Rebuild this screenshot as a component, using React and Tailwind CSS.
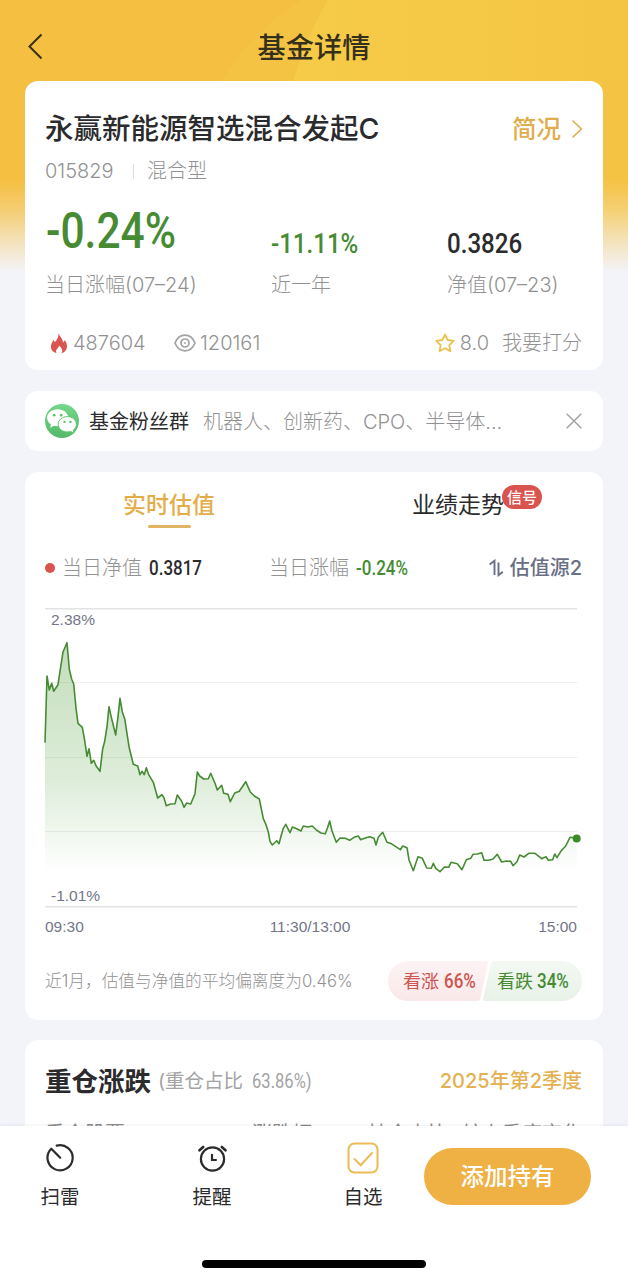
import React from "react";

// Intraday estimate, one [x, y] pair per sample
const POINTS = [
  [45, 742.7], [47, 676], [49.3, 690], [51.7, 683.3], [53.7, 691.3], [58, 684.7], [60.3, 669.3], [63, 652],
  [67, 642.7], [69.3, 669.3], [71.7, 679.3], [73.7, 684], [76, 708], [78, 723.3], [82.3, 727.3], [84.7, 740.7],
  [87, 756.3], [89, 748.7], [91.3, 763.3], [93.7, 760.3], [96, 765.7], [100, 771.3], [102.7, 748.7], [104.7, 741.3],
  [107, 726.7], [109, 706.7], [111.3, 717.3], [115.7, 735], [118, 716.7], [120, 698.3], [122.3, 712], [124.7, 718.7],
  [129, 746.7], [133.3, 764.3], [137.7, 766], [140, 774.7], [142, 771.3], [144.3, 774.7], [146.3, 767.7], [148.7, 774.7],
  [153.3, 782.3], [157.7, 798], [162, 794.7], [164, 798], [166.3, 805.7], [170.7, 804], [175, 803.7], [177.3, 795],
  [181.7, 801.3], [184, 807.3], [186.7, 803], [190.7, 804], [195, 793.7], [197.3, 772], [199.7, 776], [203.7, 779],
  [208.3, 778.7], [210.7, 773.3], [215, 783.3], [217.3, 790], [221.7, 785.3], [223.7, 793.3], [228, 794.3], [230.3, 801.7],
  [234.7, 793], [239.3, 791.3], [245.7, 781.7], [250.3, 792], [254.7, 796.3], [259.3, 799], [263.3, 818.7], [266, 824.7],
  [268.3, 832], [270, 841.3], [272.3, 845], [276.7, 840.7], [279, 843.7], [281, 836.3], [283.3, 828.3], [285.7, 824.3],
  [290, 832.7], [292.3, 827], [296.7, 828.7], [301, 831], [303.3, 826], [307.7, 827], [312.3, 826], [316.7, 830.3],
  [321, 833], [325.3, 833.7], [327.7, 827.3], [329.7, 821], [332, 831], [336.3, 842.3], [340, 838], [345.3, 838.3],
  [349.7, 840.3], [354, 837.3], [358.3, 836], [360.7, 839.7], [365.3, 838], [369.7, 836.7], [374, 838.3], [376, 845],
  [378.3, 837.3], [382.7, 832.3], [387, 842.3], [391.3, 843.7], [400.3, 849.7], [402.7, 846], [407, 847.7], [409, 860],
  [413.3, 870.7], [418, 856.7], [422.3, 858.3], [426.7, 868], [431.3, 868.3], [433.3, 863.3], [435.7, 868.3], [440, 871.7],
  [444.3, 867], [448.7, 867.3], [451, 862.3], [457.3, 863.7], [462, 869.7], [466.3, 859.7], [470.7, 858.3], [473, 854.3],
  [477.3, 854], [481.7, 852.7], [484, 860.3], [488.7, 860.3], [493, 859], [497.3, 854.3], [501.7, 862], [506.3, 861],
  [510.7, 861.3], [513, 865.7], [517, 861.7], [519.7, 855], [524, 857], [528.7, 853.3], [535, 853.3], [541.7, 858.7],
  [546, 856.7], [548.3, 860.3], [552.7, 859.7], [554.7, 854], [557, 857.7], [561.3, 850.7], [565.7, 846], [570, 837.3],
  [576.7, 838.3],
];

const LINE = POINTS.map((p) => p.join(",")).join(" ");

// Condensed digits
function Num({ className = "", children }) {
  return (
    <span
      className={`inline-block origin-left scale-x-[0.85] whitespace-nowrap font-[Roboto] font-medium ${className}`}
    >
      {children}
    </span>
  );
}

function HeaderBackground() {
  return (
    <div className="absolute inset-x-0 top-0 h-[290px]">
      <svg className="block" width="628" height="290" viewBox="0 0 628 290">
        <defs>
          <linearGradient id="fade" x1="0" y1="0" x2="0" y2="1">
            <stop offset="0.62" stopColor="#f3f4fa" stopOpacity="0" />
            <stop offset="0.72" stopColor="#f3f4fa" stopOpacity="0.25" />
            <stop offset="0.84" stopColor="#f3f4fa" stopOpacity="0.68" />
            <stop offset="0.94" stopColor="#f3f4fa" stopOpacity="1" />
          </linearGradient>
          <linearGradient id="sun" x1="0" y1="0" x2="1" y2="0">
            <stop offset="0" stopColor="#f6cb48" />
            <stop offset="1" stopColor="#f4c543" />
          </linearGradient>
        </defs>
        <rect width="628" height="290" fill="#f5bf42" />
        <path d="M302 0Q240 38 213 100V290H628V0Z" fill="#f5c344" />
        <path d="M328 0Q300 48 289 100V150H628V0Z" fill="url(#sun)" />
        <path d="M603 80H628V190H603Z" fill="#f5c344" />
        <rect width="628" height="290" fill="url(#fade)" />
      </svg>
    </div>
  );
}

function Flame() {
  return (
    <svg width="18" height="21" viewBox="0 0 18 21">
      <path
        fill="#dc5450"
        d="M8.600 0C9.300 3.600 13.300 5.700 12.900 9.500C13.900 8.900 14.400 7.900 14.500 6.900C16.500 9.200 17.400 11.800 16.900 14.500C16.400 17.400 14.200 19.500 11.500 20.200C13.300 17.300 11.500 14.700 9.100 12.400C8.700 15 6.100 15.800 6 18C5.900 18.900 6.200 19.700 6.700 20.300C3 19.500.8 16.900.9 13.600C1 10.900 2.500 9.300 3.300 7.100C4.200 7.700 4.600 8.500 4.800 9.300C7.500 6.800 8.500 3.400 8.600 0Z"
      />
    </svg>
  );
}

function Eye() {
  return (
    <svg width="22" height="18" viewBox="0 0 22 18" fill="none" stroke="#a3a3a3" strokeWidth="1.700">
      <path d="M1 9C3 4 6.500 1.200 11 1.200S19 4 21 9C19 14 15.500 16.800 11 16.800S3 14 1 9Z" />
      <circle cx="11" cy="9" r="4" />
      <circle cx="11" cy="9" r="0.900" fill="#a3a3a3" stroke="none" />
    </svg>
  );
}

function Star() {
  return (
    <svg width="20" height="20" viewBox="0 0 20 20" fill="none" stroke="#ecc04c" strokeWidth="1.800" strokeLinejoin="round">
      <path d="M10 1.500L12.700 7L18.700 7.900L14.300 12.100L15.400 18.200L10 15.300L4.600 18.200L5.700 12.100L1.300 7.900L7.300 7Z" />
    </svg>
  );
}

function WeChat() {
  return (
    <svg width="34" height="34" viewBox="0 0 34 34">
      <defs>
        <linearGradient id="wx" x1="0" y1="0" x2="0" y2="1">
          <stop offset="0" stopColor="#74d78b" />
          <stop offset="1" stopColor="#54b968" />
        </linearGradient>
      </defs>
      <circle cx="17" cy="17" r="17" fill="url(#wx)" />
      <path
        fill="#fff"
        d="M12.600 5.200C6.700 5.200 2.100 9 2.100 13.800C2.100 16.600 3.500 18.900 5.900 20.500L5.100 23.700L8.900 21.800C10.300 22.200 11.900 22.400 13.800 22.200C21 21.600 23.300 17.500 23.300 13.800C23.300 9 18.700 5.200 12.600 5.200Z"
      />
      <path
        fill="#fff"
        stroke="#61c575"
        strokeWidth="1"
        d="M22.300 12.600C17.300 12.600 13.200 16 13.200 20.300S17.300 28 22.300 28C23.500 28 24.600 27.800 25.700 27.500L29 29.200L28.200 26.200C30.300 24.800 31.400 22.700 31.400 20.300C31.400 16 27.300 12.600 22.300 12.600Z"
      />
      <g fill="#61c575">
        <circle cx="9.200" cy="11.200" r="1.400" />
        <circle cx="16.200" cy="11.200" r="1.400" />
        <circle cx="19.500" cy="17.900" r="1.200" />
        <circle cx="25.400" cy="17.900" r="1.200" />
      </g>
    </svg>
  );
}

function FundCard() {
  return (
    <section className="h-[289px] rounded-[13px] bg-white pl-5 pr-[21px] pt-[28px]">
      <div className="flex h-10 items-center justify-between">
        <h2 className="text-[28.500px] font-medium text-[#2b2b2d]">永赢新能源智选混合发起C</h2>
        <div className="mr-[-1px] flex items-center pt-px text-[24.500px] font-medium text-[#e0ac4c]">
          简况
          <svg className="mb-[2px] ml-2.5" width="12" height="20" viewBox="0 0 12 20" fill="none" stroke="#e0ac4c" strokeWidth="1.600">
            <path d="M1.500 1.500L10.300 10L1.500 18.500" />
          </svg>
        </div>
      </div>

      <div className="mt-1.5 flex h-8 items-center text-[20px] font-light text-[#929292]">
        <span className="w-[88px]">015829</span>
        <span className="h-[15px] w-px bg-[#dedede]" />
        <span className="ml-[13px]">混合型</span>
      </div>

      <div className="mt-[11px] grid h-[104px] grid-cols-[226px_176px_1fr] grid-rows-[70px_34px]">
        <div className="flex h-[66px] items-center pl-px text-[#468b34]">
          <Num className="text-[50px] leading-none">-0.24%</Num>
        </div>
        <div className="flex h-[66px] items-end pb-[6px] text-[#468b34]">
          <Num className="scale-x-[0.86] text-[28px] leading-none">-11.11%</Num>
        </div>
        <div className="flex h-[66px] items-end pb-[6px] text-[#2b2b2d]">
          <Num className="scale-x-[0.86] text-[28px] leading-none">0.3826</Num>
        </div>
        <Label>当日涨幅(07–24)</Label>
        <Label>近一年</Label>
        <Label>净值(07–23)</Label>
      </div>

      <div className="mt-[25px] flex h-8 items-center text-[20px] font-light text-[#929292]">
        <span className="ml-[5px] flex w-[124px] items-center gap-[5px]">
          <Flame />
          487604
        </span>
        <span className="flex items-center gap-[4px]">
          <Eye />
          120161
        </span>
        <span className="ml-auto flex items-center gap-[5px]">
          <Star />
          8.0
        </span>
        <span className="ml-[13px]">我要打分</span>
      </div>
    </section>
  );
}

function Label({ children }) {
  return (
    <div className="flex h-[34px] items-center whitespace-nowrap text-[20px] font-light text-[#929292]">
      {children}
    </div>
  );
}

function FansBanner() {
  return (
    <section className="mt-[21px] flex h-[60px] items-center rounded-[13px] bg-white pl-5 pr-[21px]">
      <WeChat />
      <span className="ml-[10px] pt-[2px] text-[20px] text-[#2b2b2d]">基金粉丝群</span>
      <span className="ml-3.5 pt-[2px] text-[20px] font-light text-[#929292]">机器人、创新药、CPO、半导体...</span>
      <svg className="ml-auto" width="16" height="16" viewBox="0 0 16 16" stroke="#a0a0a0" strokeWidth="1.400">
        <path d="M.7.7L15.300 15.300M15.300.7L.7 15.300" />
      </svg>
    </section>
  );
}

function Chart() {
  return (
    <div className="relative h-[300px]">
      <svg className="block overflow-visible" width="532" height="300" viewBox="45 608 532 300">
        <defs>
          <linearGradient id="area" gradientUnits="userSpaceOnUse" x1="0" y1="642" x2="0" y2="872">
            <stop offset="0" stopColor="#4f9f3a" stopOpacity="0.340" />
            <stop offset="0.600" stopColor="#4f9f3a" stopOpacity="0.190" />
            <stop offset="1" stopColor="#4f9f3a" stopOpacity="0" />
          </linearGradient>
        </defs>
        <g stroke="#eeeeef" strokeWidth="1.200">
          <path d="M45 682.500H577M45 757.500H577M45 831.500H577" />
        </g>
        <g stroke="#e2e3e5" strokeWidth="1.500">
          <path d="M45 608.700H577M45 906.700H577" />
        </g>
        <polygon points={`45,872 ${LINE} 576.7,872`} fill="url(#area)" />
        <polyline points={LINE} fill="none" stroke="#468b34" strokeWidth="1.600" strokeLinejoin="round" />
        <circle cx="576.700" cy="838.500" r="4" fill="#3b8a26" />
      </svg>
      <span className="absolute left-1.5 top-[3px] font-['Liberation_Sans'] text-[15.500px] leading-[18px] text-[#73768a]">
        2.38%
      </span>
      <span className="absolute bottom-[3px] left-1.5 font-['Liberation_Sans'] text-[15.500px] leading-[18px] text-[#73768a]">
        -1.01%
      </span>
    </div>
  );
}

function SentimentPill() {
  return (
    <div className="relative flex h-10 w-[194px] text-[18px]">
      <svg className="absolute inset-0" width="194" height="40" viewBox="0 0 194 40">
        <defs>
          <linearGradient id="up" x1="0" y1="0" x2="0" y2="1">
            <stop offset="0" stopColor="#fdf3f4" />
            <stop offset="1" stopColor="#fae8e9" />
          </linearGradient>
          <linearGradient id="down" x1="0" y1="0" x2="0" y2="1">
            <stop offset="0" stopColor="#f3f8f3" />
            <stop offset="1" stopColor="#e8f2e7" />
          </linearGradient>
        </defs>
        <path d="M20 0H98Q100.500 0 100 2.500L92.500 37.500Q92 40 89.500 40H20A20 20 0 0 1 20 0Z" fill="url(#up)" />
        <path d="M106 0H174A20 20 0 0 1 174 40H97Q94.500 40 95 37.500L103 2.500Q103.600 0 106 0Z" fill="url(#down)" />
      </svg>
      <span className="relative flex w-[94px] items-center pl-[15px] text-[#cc5552]">
        看涨
        <Num className="ml-[5px] scale-x-[0.78] text-[20px]">66%</Num>
      </span>
      <span className="relative flex items-center pl-[15px] text-[#468b34]">
        看跌
        <Num className="ml-[4px] scale-x-[0.78] text-[20px]">34%</Num>
      </span>
    </div>
  );
}

function EstimateCard() {
  return (
    <section className="mt-[21px] h-[548px] rounded-[13px] bg-white px-5 pt-3">
      <div className="mr-[-5px] grid h-[46px] grid-cols-[248px_1fr] text-[23px]">
        <div className="flex flex-col items-center font-medium text-[#e3ad48]">
          <span className="pt-px leading-[40px]">实时估值</span>
          <span className="h-[3px] w-[43px] rounded-full bg-[#dfb564]" />
        </div>
        <div className="pl-[119px] pt-px text-[#2b2b2d]">
          <span className="relative leading-[40px]">
            业绩走势
            <span className="absolute left-[90px] top-[-6px] flex h-6 w-10 items-center justify-center rounded-full bg-[#d9534f] text-[15px] font-medium leading-none text-white">
              信号
            </span>
          </span>
        </div>
      </div>

      <div className="mr-px mt-[22px] flex h-8 items-center text-[20px]">
        <span className="h-[10px] w-[10px] rounded-full bg-[#d9534f]" />
        <span className="ml-[7px] font-light text-[#929292]">当日净值</span>
        <Num className="ml-[7px] w-[120px] text-[20px] text-[#2b2b2d]">0.3817</Num>
        <span className="font-light text-[#929292]">当日涨幅</span>
        <Num className="ml-[7px] text-[20px] text-[#468b34]">-0.24%</Num>
        <span className="ml-auto flex items-center whitespace-nowrap font-medium text-[#6a6f87]">
          <svg className="mr-[6px]" width="15" height="18" viewBox="0 0 15 18" fill="none" stroke="#6a6f87" strokeWidth="1.900">
            <path d="M0.700 5.500L5.500 1.800V16" />
            <path d="M9.500 3.500V16.200L13.800 12.800" />
          </svg>
          估值源2
        </span>
      </div>

      <div className="mt-[24px]">
        <Chart />
      </div>

      <div className="mr-[6px] mt-2.5 grid grid-cols-3 font-['Liberation_Sans'] text-[15.500px] leading-[18px] text-[#73768a]">
        <span>09:30</span>
        <span className="pr-[2px] text-center">11:30/13:00</span>
        <span className="text-right">15:00</span>
      </div>

      <div className="mr-px mt-[25px] flex h-10 items-center justify-between">
        <span className="whitespace-nowrap pt-[2px] text-[16.700px] font-light text-[#929292]">
          近1月，估值与净值的平均偏离度为0.46%
        </span>
        <SentimentPill />
      </div>
    </section>
  );
}

function HoldingsCard() {
  return (
    <section className="mt-5 h-[200px] rounded-[13px] bg-white pl-5 pr-[21px] pt-[21px]">
      <div className="flex h-10 items-center">
        <h3 className="pt-px text-[26.500px] font-bold text-[#2b2b2d]">重仓涨跌</h3>
        <span className="ml-[7px] flex items-center pt-px text-[19.500px] text-[#a3a3a3]">
          (重仓占比
          <Num className="ml-[9px] text-[19.500px] font-normal">63.86%)</Num>
        </span>
        <span className="ml-auto text-[20px] font-medium text-[#e3b152]">2025年第2季度</span>
      </div>
      <div className="mt-[17px] flex text-[20px] leading-[32px] text-[#8b8b8b]">
        <span className="w-[207px]">重仓股票</span>
        <span className="w-[116px]">涨跌幅</span>
        <span className="w-[94px]">持仓占比</span>
        <span className="whitespace-nowrap">较上季度变化</span>
      </div>
    </section>
  );
}

function TabItem({ label, children }) {
  return (
    <div className="flex w-[60px] flex-col items-center">
      <div className="flex h-9 items-center">{children}</div>
      <span className="mt-[5px] text-[19.500px] leading-[32px] text-[#2b2b2d]">{label}</span>
    </div>
  );
}

function BottomBar() {
  return (
    <nav className="absolute inset-x-0 bottom-0 h-[155px] bg-white shadow-[0_-1px_3px_rgba(0,0,0,0.06)]">
      <div className="flex pl-[30px] pt-[14px]">
        <TabItem label="扫雷">
          <svg width="30" height="30" viewBox="0 0 30 30" fill="none" stroke="#2b2b2d" strokeWidth="2.200" strokeLinecap="round">
            <path d="M11.700 2.600A12.600 12.600 0 1 1 6.300 5.700L15.200 14.700" strokeLinejoin="round" />
          </svg>
        </TabItem>
        <div className="w-[92px]" />
        <TabItem label="提醒">
          <svg width="30" height="30" viewBox="0 0 30 30" fill="none" stroke="#2b2b2d" strokeWidth="2.200" strokeLinecap="round">
            <circle cx="15.500" cy="16" r="11.600" />
            <path d="M15 11.800V17H19" />
            <path d="M2.500 7.300L6.200 4M24.800 4L28.500 7.300" strokeWidth="2.600" />
          </svg>
        </TabItem>
        <div className="w-[91px]" />
        <TabItem label="自选">
          <svg width="32" height="32" viewBox="0 0 32 32" fill="none" stroke="#ebbb55" strokeWidth="2" strokeLinecap="round">
            <rect x="1.500" y="1.500" width="29" height="29" rx="6" />
            <path d="M7.500 17L13.700 23.200L25 11" />
          </svg>
        </TabItem>
        <button className="ml-[31px] mt-2 flex h-[57px] w-[167px] items-center justify-center rounded-full bg-[#efb144] text-[23.500px] font-medium text-white">
          添加持有
        </button>
      </div>
      <div className="absolute bottom-[13px] left-[202px] h-2 w-[224px] rounded-full bg-black" />
    </nav>
  );
}

export default function App() {
  return (
    <div className="relative h-[1281px] w-[628px] overflow-hidden bg-[#f3f4fa] font-[Inter,'Noto_Sans_CJK_SC',sans-serif]">
      <HeaderBackground />
      <div className="relative">
        <header className="grid h-[81px] grid-cols-[60px_1fr_60px] items-center pt-[12px]">
          <svg className="ml-7" width="15" height="27" viewBox="0 0 15 27" fill="none" stroke="#3a3015" strokeWidth="2">
            <path d="M13.500 1.500L1.500 13.500L13.500 25.500" />
          </svg>
          <h1 className="pt-[3px] text-center text-[28.200px] font-medium leading-10 text-[#35301c]">基金详情</h1>
        </header>
        <main className="px-[25px]">
          <FundCard />
          <FansBanner />
          <EstimateCard />
          <HoldingsCard />
        </main>
      </div>
      <BottomBar />
    </div>
  );
}
